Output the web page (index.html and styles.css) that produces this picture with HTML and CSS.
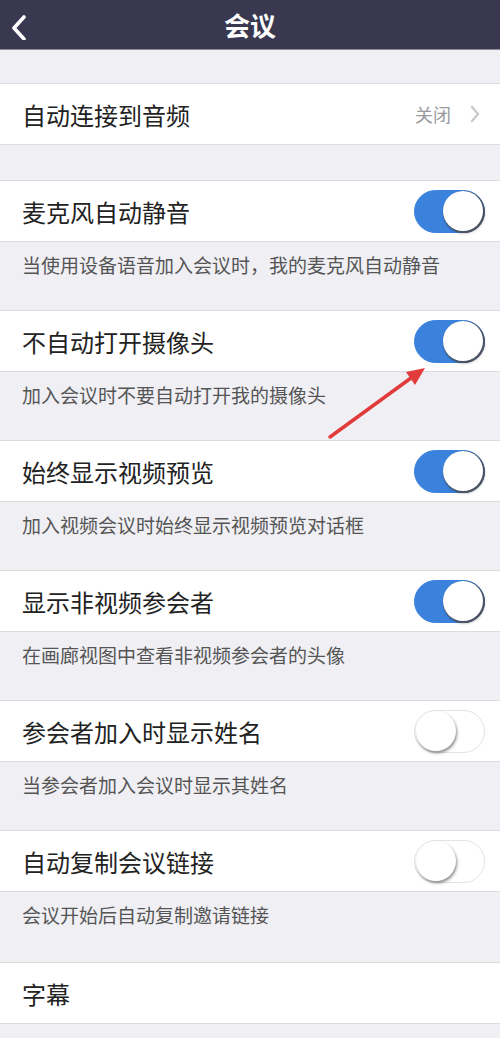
FILE: index.html
```html
<!DOCTYPE html>
<html lang="zh-CN">
<head>
    <meta charset="UTF-8">
    <title>会议</title>
    <link rel="stylesheet" href="styles.css">
</head>
<body>
<div class="page">
    <!-- 顶部导航 -->
    <div class="header">
        <div class="back">
            <svg width="20" height="30" viewBox="0 0 20 30"><polyline points="14,7 4,18 14,29" fill="none" stroke="#fff" stroke-width="3.6" stroke-linecap="round" stroke-linejoin="round"/></svg>
        </div>
        <div class="title">会议</div>
        <div></div>
    </div>

    <div class="gap"></div>

    <div class="row">
        <span class="label">自动连接到音频</span>
        <span class="value">关闭</span>
        <svg class="chevron" width="12" height="20" viewBox="0 0 12 20"><polyline points="3,3 9,10 3,17" fill="none" stroke="#c9c9ce" stroke-width="2.4" stroke-linecap="round" stroke-linejoin="round"/></svg>
    </div>

    <div class="gap gap-lg"></div>

    <div class="row">
        <span class="label">麦克风自动静音</span>
        <div class="toggle on"><div class="knob"></div></div>
    </div>
    <div class="desc">当使用设备语音加入会议时，我的麦克风自动静音</div>

    <div class="row">
        <span class="label">不自动打开摄像头</span>
        <div class="toggle on"><div class="knob"></div></div>
    </div>
    <div class="desc">加入会议时不要自动打开我的摄像头</div>

    <div class="row">
        <span class="label">始终显示视频预览</span>
        <div class="toggle on"><div class="knob"></div></div>
    </div>
    <div class="desc">加入视频会议时始终显示视频预览对话框</div>

    <div class="row">
        <span class="label">显示非视频参会者</span>
        <div class="toggle on"><div class="knob"></div></div>
    </div>
    <div class="desc">在画廊视图中查看非视频参会者的头像</div>

    <div class="row">
        <span class="label">参会者加入时显示姓名</span>
        <div class="toggle"><div class="knob"></div></div>
    </div>
    <div class="desc">当参会者加入会议时显示其姓名</div>

    <div class="row">
        <span class="label">自动复制会议链接</span>
        <div class="toggle"><div class="knob"></div></div>
    </div>
    <div class="desc">会议开始后自动复制邀请链接</div>

    <div class="row last">
        <span class="label">字幕</span>
    </div>
    <div class="desc">当主持人启用字幕时显示字幕</div>

    <!-- 红色标注箭头 -->
    <svg class="mark" width="500" height="1038" viewBox="0 0 500 1038">
        <line x1="330" y1="437" x2="411" y2="378" stroke="#e23b3b" stroke-width="3.5" stroke-linecap="round"/>
        <polygon points="425,368 415,385 406,372" fill="#e23b3b"/>
    </svg>
</div>
</body>
</html>
```

FILE: styles.css
```css
body { margin: 0; background: #efeff4; font-family: "Noto Sans CJK SC", "Noto Sans", sans-serif; }
.page { position: relative; width: 500px; height: 1038px; overflow: hidden; }

.header { height: 49px; background: #393850; border-bottom: 1px solid #8d8c99; display: grid; grid-template-columns: 1fr auto 1fr; align-items: center; }
.back { padding-left: 10px; display: flex; align-items: center; }
.title { color: #fff; font-size: 26px; font-weight: bold; }

.gap { height: 33px; }
.gap-lg { height: 35px; }

.row { height: 62px; box-sizing: border-box; background: #fff; border-top: 1px solid #dcdce0; border-bottom: 1px solid #dcdce0; display: flex; align-items: center; padding: 0 15px 0 22px; }
.row.last { margin-top: 2px; }
.label { flex: 1; font-size: 24px; color: #222; }
.value { font-size: 18px; color: #9a9a9e; margin-right: 18px; }
.chevron { margin-right: 4px; }

.desc { height: 68px; box-sizing: border-box; padding: 10px 0 0 22px; font-size: 19px; color: #555; line-height: 26px; }

.toggle { width: 71px; height: 43px; box-sizing: border-box; border-radius: 22px; border: 1.5px solid #e3e3e6; background: #fff; display: flex; align-items: center; padding: 0 1px; }
.toggle.on { background: #3b82dd; border-color: #3b82dd; justify-content: flex-end; }
.knob { width: 40px; height: 40px; border-radius: 50%; background: #fff; box-shadow: 1px 2px 3px rgba(0,0,0,0.45); }
.toggle.on .knob { box-shadow: 1px 1px 0 1px #4b5363, 1px 2px 3px rgba(0,0,0,0.4); }

.mark { position: absolute; left: 0; top: 0; pointer-events: none; }
```
